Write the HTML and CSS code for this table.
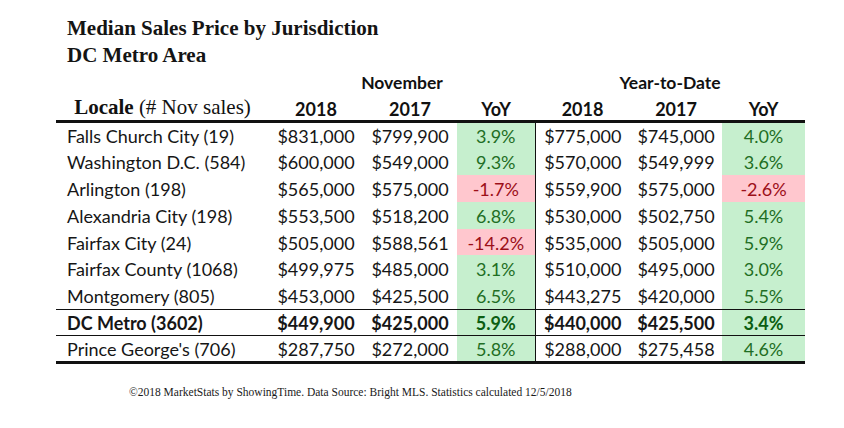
FILE: index.html
```html
<!DOCTYPE html>
<html lang="en">
<head>
<meta charset="utf-8">
<title>Median Sales Price by Jurisdiction</title>
<link rel="stylesheet" href="styles.css">
</head>
<body>
<div class="page">
  <header class="title">
    <div class="title-line">Median Sales Price by Jurisdiction</div>
    <div class="title-line">DC Metro Area</div>
  </header>
  <table class="stats">
    <colgroup>
      <col class="c-locale">
      <col class="c-money">
      <col class="c-money">
      <col class="c-yoy1">
      <col class="c-money2">
      <col class="c-money3">
      <col class="c-yoy2">
    </colgroup>
    <thead>
      <tr class="group-row">
        <th></th>
        <th colspan="3">November</th>
        <th colspan="3">Year-to-Date</th>
      </tr>
      <tr class="head-row">
        <th class="locale-head"><b>Locale</b> (# Nov sales)</th>
        <th>2018</th>
        <th>2017</th>
        <th>YoY</th>
        <th>2018</th>
        <th>2017</th>
        <th>YoY</th>
      </tr>
    </thead>
    <tbody>
      <tr>
        <td class="name">Falls Church City (19)</td><td>$831,000</td><td>$799,900</td><td class="up">3.9%</td>
        <td class="split">$775,000</td><td>$745,000</td><td class="up">4.0%</td>
      </tr>
      <tr>
        <td class="name">Washington D.C. (584)</td><td>$600,000</td><td>$549,000</td><td class="up">9.3%</td>
        <td class="split">$570,000</td><td>$549,999</td><td class="up">3.6%</td>
      </tr>
      <tr>
        <td class="name">Arlington (198)</td><td>$565,000</td><td>$575,000</td><td class="down">-1.7%</td>
        <td class="split">$559,900</td><td>$575,000</td><td class="down">-2.6%</td>
      </tr>
      <tr>
        <td class="name">Alexandria City (198)</td><td>$553,500</td><td>$518,200</td><td class="up">6.8%</td>
        <td class="split">$530,000</td><td>$502,750</td><td class="up">5.4%</td>
      </tr>
      <tr>
        <td class="name">Fairfax City (24)</td><td>$505,000</td><td>$588,561</td><td class="down">-14.2%</td>
        <td class="split">$535,000</td><td>$505,000</td><td class="up">5.9%</td>
      </tr>
      <tr>
        <td class="name">Fairfax County (1068)</td><td>$499,975</td><td>$485,000</td><td class="up">3.1%</td>
        <td class="split">$510,000</td><td>$495,000</td><td class="up">3.0%</td>
      </tr>
      <tr class="before-total">
        <td class="name">Montgomery (805)</td><td>$453,000</td><td>$425,500</td><td class="up">6.5%</td>
        <td class="split">$443,275</td><td>$420,000</td><td class="up">5.5%</td>
      </tr>
      <tr class="total">
        <td class="name">DC Metro (3602)</td><td>$449,900</td><td>$425,000</td><td class="up">5.9%</td>
        <td class="split">$440,000</td><td>$425,500</td><td class="up">3.4%</td>
      </tr>
      <tr class="last">
        <td class="name">Prince George's (706)</td><td>$287,750</td><td>$272,000</td><td class="up">5.8%</td>
        <td class="split">$288,000</td><td>$275,458</td><td class="up">4.6%</td>
      </tr>
    </tbody>
  </table>
  <footer class="source">©2018 MarketStats by ShowingTime. Data Source: Bright MLS. Statistics calculated 12/5/2018</footer>
</div>
</body>
</html>
```
FILE: styles.css
```css
html, body {
  margin: 0;
  padding: 0;
  background: #ffffff;
}

.page {
  width: 844px;
  height: 428px;
  overflow: hidden;
  padding-top: 15px;
  box-sizing: border-box;
  color: #111111;
}

.title {
  padding-left: 67px;
  font-family: "Liberation Serif", "Times New Roman", serif;
  font-weight: bold;
  font-size: 21px;
  color: #141414;
}

.title-line {
  height: 27px;
  line-height: 27px;
}

.stats {
  margin-left: 56px;
  border-collapse: collapse;
  table-layout: fixed;
  width: 749px;
  font-family: Lato, "Open Sans", sans-serif;
  font-size: 18px;
}

.c-locale { width: 213px; }
.c-money { width: 94px; }
.c-yoy1 { width: 78px; }
.c-money2 { width: 95px; }
.c-money3 { width: 92px; }
.c-yoy2 { width: 83px; }

.stats th,
.stats td {
  padding: 0;
  text-align: center;
  white-space: nowrap;
}

.group-row th {
  height: 26px;
  font-weight: bold;
  font-size: 17.5px;
  vertical-align: middle;
}

.head-row th {
  height: 24px;
  font-weight: bold;
  font-size: 18px;
  vertical-align: bottom;
  padding-bottom: 0;
  border-bottom: 3px solid #111111;
}

.head-row .locale-head {
  font-family: "Liberation Serif", "Times New Roman", serif;
  font-weight: normal;
  font-size: 21px;
}

.head-row .locale-head b {
  font-weight: bold;
}

.stats tbody td {
  height: 26.8px;
  padding-top: 1px;
  box-sizing: border-box;
  vertical-align: middle;
  color: #161616;
}

.stats tbody td.name {
  text-align: left;
  padding-left: 11px;
}

.stats .split {
  border-left: 1px solid #111111;
}

.stats td.up {
  background: #c6efce;
  color: #1f6e24;
}

.stats td.down {
  background: #ffc7ce;
  color: #9c0f19;
}

.before-total td {
  border-bottom: 1px solid #111111;
}

.total td {
  font-weight: bold;
  border-bottom: 1px solid #111111;
}

.total td.up {
  color: #0c5e12;
}

.last td {
  border-bottom: 3px solid #111111;
}

.source {
  margin-top: 22px;
  padding-left: 129px;
  font-family: "Liberation Serif", "Times New Roman", serif;
  font-size: 11.5px;
  color: #1a1a1a;
}
```
